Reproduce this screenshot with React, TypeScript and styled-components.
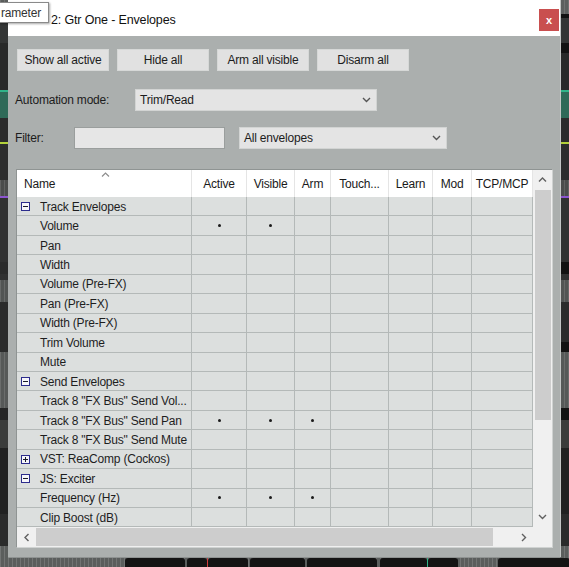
import React from "react";
import styled, { createGlobalStyle } from "styled-components";

const Global = createGlobalStyle`
  html, body { margin: 0; padding: 0; }
  body {
    width: 569px;
    height: 567px;
    overflow: hidden;
    background: #2a2b2b;
    font-family: "Liberation Sans", Arial, sans-serif;
  }
`;

/* ---------- arrange view behind the window ---------- */

const Arrange = styled.div`
  position: relative;
  width: 569px;
  height: 567px;
  overflow: hidden;
  display: flex;
  flex-direction: column;
`;

const Lane = styled.div<{ $h: number; $bg: string; $ticks?: boolean; $wave?: boolean }>`
  flex: 0 0 ${(p) => p.$h}px;
  background-color: ${(p) => p.$bg};
  background-image: ${(p) =>
    p.$wave
      ? "linear-gradient(to right, transparent 0 556px, #121212 556px)"
      : p.$ticks
      ? "repeating-linear-gradient(to right, rgba(255,255,255,0.12) 0 1px, transparent 1px 4px)"
      : "none"};
`;

const WaveLane = styled.div`
  flex: 1 1 auto;
  display: flex;
  align-items: flex-end;
  background: #5b5e5d;
  background-image: repeating-linear-gradient(to right, rgba(255,255,255,0.14) 0 1px, transparent 1px 4px);
`;

const WaveSeg = styled.div<{ $w: number; $c?: string }>`
  flex: 0 0 ${(p) => p.$w}px;
  height: 9px;
  background: ${(p) => p.$c || "#141414"};
  border-radius: 3px 3px 0 0;
`;

const WaveGap = styled.div<{ $w: number }>`
  flex: 0 0 ${(p) => p.$w}px;
`;

/* ---------- window ---------- */

const Window = styled.div`
  position: absolute;
  left: 8px;
  top: 0;
  width: 552px;
  height: 557px;
  background: #abafae;
  display: flex;
  flex-direction: column;
  box-shadow: 1px 0 0 #c3c6c5, 0 1px 0 #8e9291;
`;

const TitleBar = styled.div`
  flex: 0 0 36px;
  background: #ffffff;
  display: flex;
  align-items: flex-start;
  padding-top: 9px;
  box-sizing: border-box;
`;

const Title = styled.div`
  flex: 1;
  height: 22px;
  line-height: 22px;
  padding-left: 43px;
  font-size: 12.5px;
  color: #111;
  letter-spacing: -0.15px;
`;

const CloseButton = styled.div`
  width: 20px;
  height: 22px;
  margin-right: 1px;
  background: #c94f4f;
  color: #fff;
  font-size: 11px;
  font-weight: bold;
  display: flex;
  align-items: center;
  justify-content: center;
`;

const Body = styled.div`
  flex: 1;
  display: flex;
  flex-direction: column;
  padding: 13px 7px 9px 7px;
  box-sizing: border-box;
  font-size: 12px;
  color: #1c1c1c;
`;

const ButtonRow = styled.div`
  display: flex;
  gap: 8px;
  margin-left: 2px;
`;

const PushButton = styled.div`
  width: 92px;
  height: 22px;
  box-sizing: border-box;
  background: #e1e1e1;
  border: 1px solid #d6d8d7;
  display: flex;
  align-items: center;
  justify-content: center;
  letter-spacing: -0.2px;
`;

const FieldRow = styled.div<{ $top: number }>`
  display: flex;
  align-items: center;
  margin-top: ${(p) => p.$top}px;
  height: 22px;
`;

const Label = styled.div<{ $w: number }>`
  width: ${(p) => p.$w}px;
  letter-spacing: -0.2px;
`;

const Select = styled.div<{ $w: number; $ml?: number }>`
  width: ${(p) => p.$w}px;
  margin-left: ${(p) => p.$ml || 0}px;
  height: 22px;
  box-sizing: border-box;
  background: #e4e4e4;
  border: 1px solid #d2d4d3;
  display: flex;
  align-items: center;
  padding: 0 5px 0 4px;
  letter-spacing: -0.2px;
  span { flex: 1; }
`;

const TextInput = styled.div`
  width: 151px;
  height: 22px;
  box-sizing: border-box;
  background: #e6e6e6;
  border: 1px solid #9a9e9d;
`;

/* ---------- list view ---------- */

const ListFrame = styled.div`
  margin: 20px 0 0 1px;
  width: 537px;
  height: 379px;
  box-sizing: border-box;
  border: 1px solid #8f9493;
  border-right-color: #cfd2d1;
  border-bottom-color: #cfd2d1;
  display: grid;
  grid-template-columns: 516px 19px;
  grid-template-rows: 357px 20px;
  background: #f0f0f0;
`;

const Table = styled.div`
  overflow: hidden;
  background: #dcdfde;
`;

const COLS = "175px 55px 48px 36px 58px 44px 39px 61px";

const HeaderRow = styled.div`
  display: grid;
  grid-template-columns: ${COLS};
  height: 27px;
  background: #ffffff;
`;

const HeaderCell = styled.div<{ $left?: boolean }>`
  position: relative;
  display: flex;
  align-items: center;
  justify-content: ${(p) => (p.$left ? "flex-start" : "center")};
  padding-left: ${(p) => (p.$left ? "7px" : "0")};
  border-right: 1px solid #e5e5e5;
  white-space: nowrap;
  overflow: hidden;
  letter-spacing: -0.2px;
  color: #1a1a1a;
`;

const SortMark = styled.svg`
  position: absolute;
  left: 84px;
  top: 2px;
`;

const Row = styled.div`
  display: grid;
  grid-template-columns: ${COLS};
  height: 19.45px;
`;

const Cell = styled.div`
  border-right: 1px solid #b4b9b8;
  border-bottom: 1px solid #b4b9b8;
  display: flex;
  align-items: center;
  justify-content: center;
`;

const NameCell = styled(Cell)`
  justify-content: flex-start;
  padding-left: 4px;
  padding-top: 1px;
  white-space: nowrap;
  overflow: hidden;
  letter-spacing: -0.2px;
  color: #1e1e1e;
`;

const Expander = styled.div`
  width: 9px;
  height: 9px;
  box-sizing: border-box;
  border: 1px solid #2c2c8c;
  background: #f6f6fa;
  position: relative;
  margin-right: 10px;
  flex: 0 0 9px;
`;

const ExpanderBar = styled.div<{ $vertical?: boolean }>`
  position: absolute;
  background: #1a1a2a;
  ${(p) =>
    p.$vertical
      ? "left: 3px; top: 1px; width: 1px; height: 5px;"
      : "left: 1px; top: 3px; width: 5px; height: 1px;"}
`;

const Indent = styled.div`
  flex: 0 0 19px;
`;

const Dot = styled.div`
  width: 3px;
  height: 3px;
  border-radius: 50%;
  background: #1a1a1a;
`;

const VScroll = styled.div`
  display: flex;
  flex-direction: column;
  align-items: center;
  background: #f0f0f0;
`;

const ArrowBox = styled.div<{ $w?: number; $h?: number }>`
  flex: 0 0 auto;
  width: ${(p) => p.$w || 19}px;
  height: ${(p) => p.$h || 20}px;
  display: flex;
  align-items: center;
  justify-content: center;
`;

const VThumb = styled.div`
  width: 16px;
  height: 230px;
  margin-left: 1px;
  background: #cdcdcd;
`;

const Spacer = styled.div`
  flex: 1;
`;

const HScroll = styled.div`
  display: flex;
  align-items: stretch;
  background: #f0f0f0;
  padding-top: 1px;
  padding-bottom: 1px;
`;

const HThumb = styled.div`
  flex: 0 0 457px;
  background: #cdcdcd;
`;

const Corner = styled.div`
  background: #f0f0f0;
`;

const Tooltip = styled.div`
  position: absolute;
  left: -1px;
  top: 2px;
  width: 50px;
  height: 21px;
  box-sizing: border-box;
  background: #ffffff;
  border: 1px solid #8a8a8a;
  box-shadow: 1px 1px 2px rgba(0, 0, 0, 0.35);
  font-size: 12px;
  color: #333;
  display: flex;
  align-items: center;
  padding-left: 1px;
  letter-spacing: -0.2px;
`;

/* ---------- data ---------- */

const columns = [
  { label: "Name" },
  { label: "Active" },
  { label: "Visible" },
  { label: "Arm" },
  { label: "Touch..." },
  { label: "Learn" },
  { label: "Mod" },
  { label: "TCP/MCP" },
];

type EnvRow = { name: string; group?: "open" | "closed"; marks?: number[] };

const rows: EnvRow[] = [
  { name: "Track Envelopes", group: "open" },
  { name: "Volume", marks: [1, 1, 0] },
  { name: "Pan" },
  { name: "Width" },
  { name: "Volume (Pre-FX)" },
  { name: "Pan (Pre-FX)" },
  { name: "Width (Pre-FX)" },
  { name: "Trim Volume" },
  { name: "Mute" },
  { name: "Send Envelopes", group: "open" },
  { name: 'Track 8 "FX Bus" Send Vol...' },
  { name: 'Track 8 "FX Bus" Send Pan', marks: [1, 1, 1] },
  { name: 'Track 8 "FX Bus" Send Mute' },
  { name: "VST: ReaComp (Cockos)", group: "closed" },
  { name: "JS: Exciter", group: "open" },
  { name: "Frequency (Hz)", marks: [1, 1, 1] },
  { name: "Clip Boost (dB)" },
];

const lanes = [
  { h: 14, bg: "#5c5f5e", ticks: true },
  { h: 4, bg: "#282929", wave: true },
  { h: 25, bg: "#333535" },
  { h: 10, bg: "#282929", wave: true },
  { h: 37, bg: "#282929" },
  { h: 2, bg: "#2fb489" },
  { h: 26, bg: "#2e6a58" },
  { h: 24, bg: "#2a2b2b" },
  { h: 2, bg: "#b3d13a" },
  { h: 36, bg: "#2c2d2d" },
  { h: 16, bg: "#4a4c4b", ticks: true },
  { h: 2, bg: "#8c55cf" },
  { h: 64, bg: "#303131" },
  { h: 12, bg: "#2a2b2b", wave: true },
  { h: 6, bg: "#303131" },
  { h: 22, bg: "#515453", ticks: true },
  { h: 40, bg: "#2a2b2b" },
  { h: 10, bg: "#2a2b2b", wave: true },
  { h: 56, bg: "#565958", ticks: true },
  { h: 12, bg: "#252626", wave: true },
  { h: 28, bg: "#3a3c3b" },
  { h: 66, bg: "#202121" },
  { h: 32, bg: "#2a2b2b" },
];

const wave = [
  { gap: 125 },
  { seg: 60 },
  { gap: 2 },
  { seg: 20 },
  { seg: 1, c: "#d23a3a" },
  { seg: 40 },
  { gap: 2 },
  { seg: 55 },
  { gap: 2 },
  { seg: 70 },
  { gap: 3 },
  { seg: 47 },
  { seg: 1, c: "#2fb489" },
  { seg: 30 },
  { gap: 40 },
  { seg: 72 },
];

/* ---------- icons ---------- */

const Chevron = ({ dir, color = "#555" }: { dir: "up" | "down" | "left" | "right"; color?: string }) => {
  const pts: Record<string, string> = {
    down: "1,1 4.5,4.5 8,1",
    up: "1,4.5 4.5,1 8,4.5",
    left: "4.5,1 1,4.5 4.5,8",
    right: "1,1 4.5,4.5 1,8",
  };
  const horiz = dir === "left" || dir === "right";
  return (
    <svg width={horiz ? 6 : 9} height={horiz ? 9 : 6} viewBox={horiz ? "0 0 6 9" : "0 0 9 6"}>
      <polyline points={pts[dir]} fill="none" stroke={color} strokeWidth="1.4" />
    </svg>
  );
};

/* ---------- component ---------- */

export default function App() {
  return (
    <>
      <Global />
      <Arrange>
        {lanes.map((l, i) => (
          <Lane key={i} $h={l.h} $bg={l.bg} $ticks={l.ticks} $wave={l.wave} />
        ))}
        <WaveLane>
          {wave.map((w, i) =>
            "gap" in w && w.gap !== undefined ? (
              <WaveGap key={i} $w={w.gap} />
            ) : (
              <WaveSeg key={i} $w={(w as { seg: number }).seg} $c={(w as { c?: string }).c} />
            )
          )}
        </WaveLane>

        <Window>
          <TitleBar>
            <Title>2: Gtr One - Envelopes</Title>
            <CloseButton>x</CloseButton>
          </TitleBar>
          <Body>
            <ButtonRow>
              <PushButton>Show all active</PushButton>
              <PushButton>Hide all</PushButton>
              <PushButton>Arm all visible</PushButton>
              <PushButton>Disarm all</PushButton>
            </ButtonRow>

            <FieldRow $top={18}>
              <Label $w={120}>Automation mode:</Label>
              <Select $w={242}>
                <span>Trim/Read</span>
                <Chevron dir="down" />
              </Select>
            </FieldRow>

            <FieldRow $top={16}>
              <Label $w={59}>Filter:</Label>
              <TextInput />
              <Select $w={208} $ml={14}>
                <span>All envelopes</span>
                <Chevron dir="down" />
              </Select>
            </FieldRow>

            <ListFrame>
              <Table>
                <HeaderRow>
                  {columns.map((c, i) => (
                    <HeaderCell key={c.label} $left={i === 0}>
                      {i === 0 && (
                        <SortMark width="9" height="5" viewBox="0 0 9 5">
                          <polyline points="1,4.5 4.5,1 8,4.5" fill="none" stroke="#8d8d8d" strokeWidth="1.2" />
                        </SortMark>
                      )}
                      {c.label}
                    </HeaderCell>
                  ))}
                </HeaderRow>
                {rows.map((r) => (
                  <Row key={r.name}>
                    <NameCell>
                      {r.group ? (
                        <Expander>
                          <ExpanderBar />
                          {r.group === "closed" && <ExpanderBar $vertical />}
                        </Expander>
                      ) : (
                        <Indent />
                      )}
                      {r.name}
                    </NameCell>
                    {Array.from({ length: 7 }).map((_, ci) => (
                      <Cell key={ci}>{r.marks && ci < 3 && r.marks[ci] ? <Dot /> : null}</Cell>
                    ))}
                  </Row>
                ))}
              </Table>

              <VScroll>
                <ArrowBox>
                  <Chevron dir="up" color="#606060" />
                </ArrowBox>
                <VThumb />
                <Spacer />
                <ArrowBox>
                  <Chevron dir="down" color="#606060" />
                </ArrowBox>
              </VScroll>

              <HScroll>
                <ArrowBox $h={18}>
                  <Chevron dir="left" color="#606060" />
                </ArrowBox>
                <HThumb />
                <Spacer />
                <ArrowBox $h={18}>
                  <Chevron dir="right" color="#606060" />
                </ArrowBox>
              </HScroll>
              <Corner />
            </ListFrame>
          </Body>
        </Window>

        <Tooltip>rameter</Tooltip>
      </Arrange>
    </>
  );
}
